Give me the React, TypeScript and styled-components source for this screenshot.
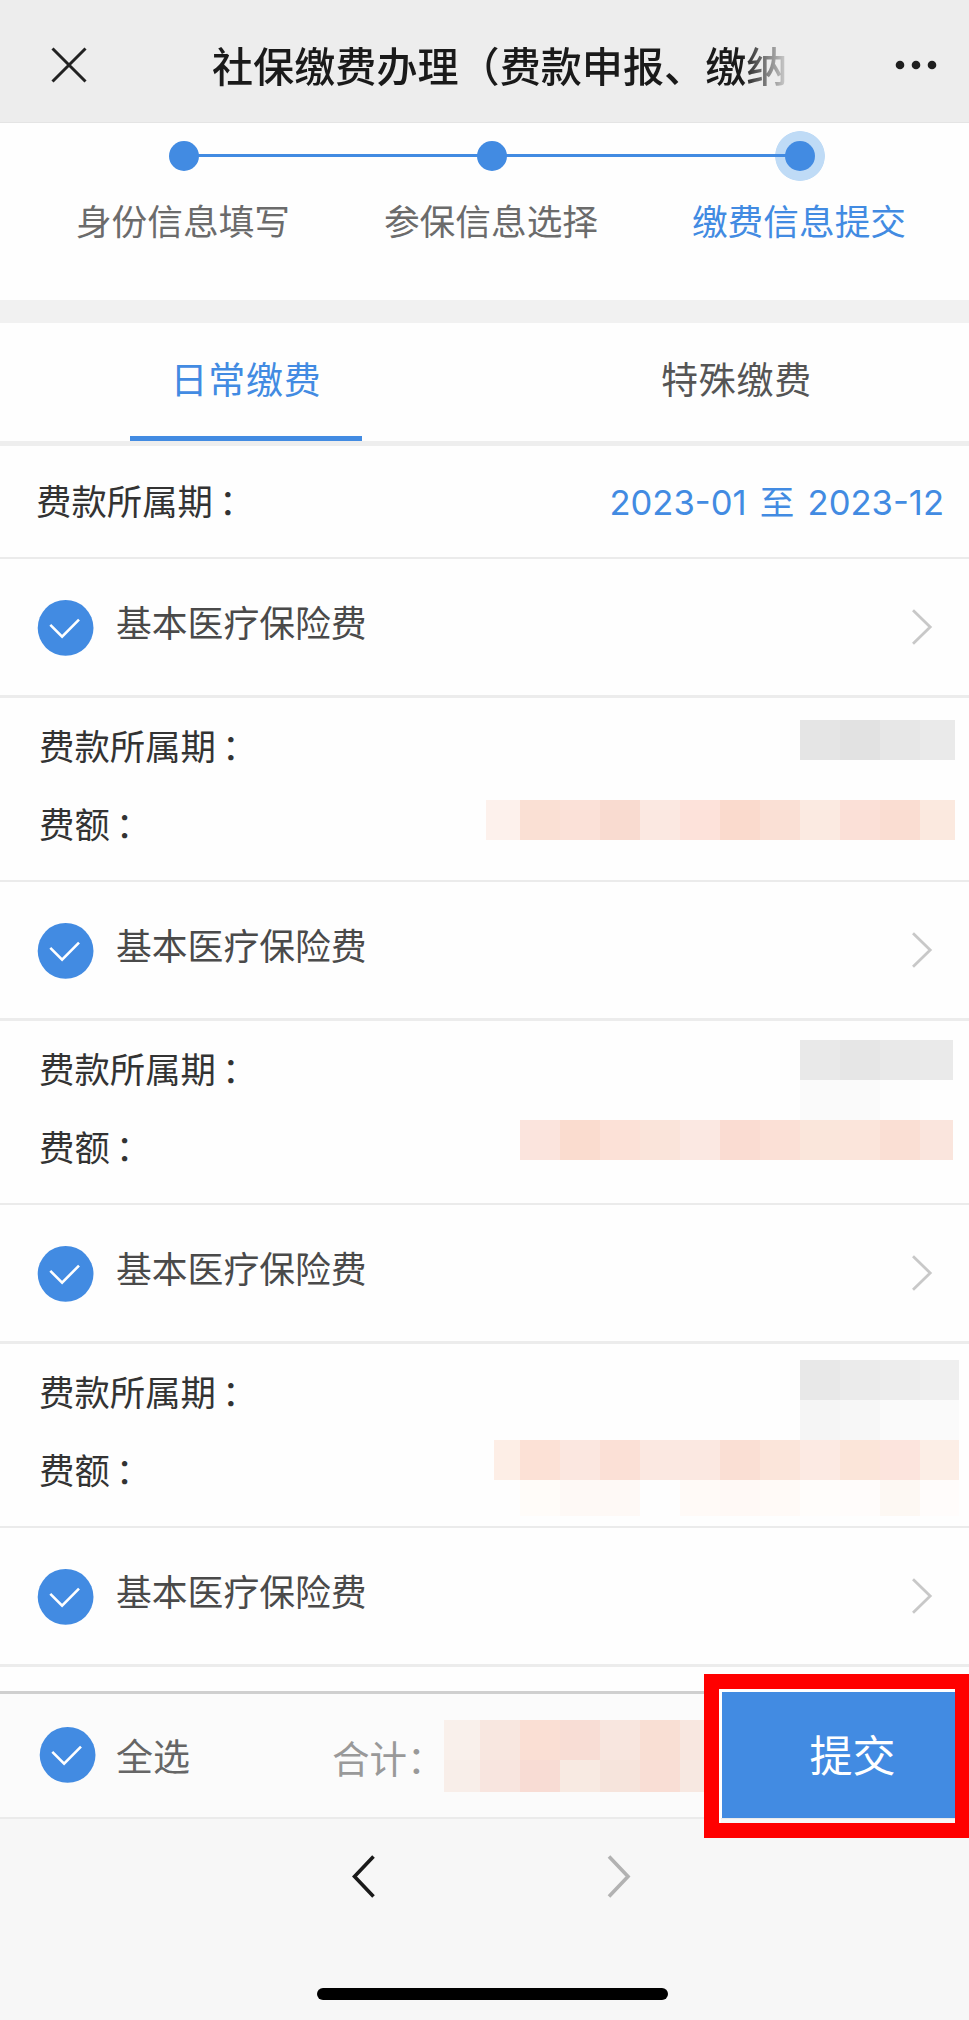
import React from 'react';
import styled, { createGlobalStyle } from 'styled-components';

const BLUE = '#428be2';

const GlobalStyle = createGlobalStyle`
  *, *::before, *::after { box-sizing: border-box; }
  html, body { margin: 0; padding: 0; background: #f7f7f7; }
  body {
    font-family: "Noto Sans CJK SC", "Noto Sans", sans-serif;
    overflow: hidden;
  }
  svg { display: block; }
`;

const Screen = styled.div`
  display: flex;
  flex-direction: column;
  width: 969px;
  height: 2020px;
  overflow: hidden;
  background: #fefefe;
`;

const NavBar = styled.header`
  display: flex;
  align-items: center;
  flex: none;
  height: 123px;
  padding: 8px 32px 0 51px;
  background: #ededed;
  border-bottom: 1px solid #e4e4e4;
`;

const Title = styled.h1`
  width: 580px;
  margin: 0 0 3px 125px;
  white-space: nowrap;
  font-size: 41.1px;
  line-height: 60px;
  font-weight: 500;
  color: #1a1a1a;
  mask-image: linear-gradient(to right, #000 530px, transparent 582px);
`;

const MoreIcon = styled.svg`
  margin-left: auto;
`;

const Steps = styled.section`
  display: grid;
  grid-template-columns: repeat(3, 308px);
  flex: none;
  height: 177px;
  padding: 8px 15px 0 30px;
`;

const Step = styled.div`
  display: flex;
  flex-direction: column;
  align-items: center;
`;

const Track = styled.div<{ $left: boolean; $right: boolean; $active: boolean }>`
  display: grid;
  place-items: center;
  width: 308px;
  height: 50px;
  background:
    linear-gradient(${BLUE}, ${BLUE}) 0 23px / ${(p) => (p.$left ? '154px' : '0')} 3px no-repeat,
    linear-gradient(${BLUE}, ${BLUE}) 100% 23px / ${(p) => (p.$right ? '154px' : '0')} 3px no-repeat,
    radial-gradient(circle, ${(p) => (p.$active ? '#bfdbf6' : 'transparent')} 24.5px, transparent 25.2px);
`;

const Dot = styled.span`
  width: 30px;
  height: 30px;
  border-radius: 50%;
  background: ${BLUE};
`;

const StepLabel = styled.span<{ $active: boolean }>`
  margin: 14px 2px 0 0;
  font-size: 35.7px;
  line-height: 50px;
  white-space: nowrap;
  color: ${(p) => (p.$active ? BLUE : '#6b6b6b')};
`;

const Divider = styled.div`
  flex: none;
  height: 23px;
  background: #f1f1f1;
`;

const Tabs = styled.nav`
  display: grid;
  grid-template-columns: 492px 489px;
  flex: none;
  height: 123px;
  border-bottom: 5px solid #eeeeee;
`;

const Tab = styled.div<{ $active?: boolean }>`
  display: flex;
  justify-content: center;
  justify-self: center;
  width: 232px;
  height: 118px;
  padding-top: 30px;
  font-size: 37px;
  letter-spacing: 0.8px;
  line-height: 50px;
  color: ${(p) => (p.$active ? BLUE : '#555')};
  border-bottom: 5px solid ${(p) => (p.$active ? BLUE : 'transparent')};
`;

const PeriodRow = styled.div`
  display: flex;
  justify-content: space-between;
  flex: none;
  height: 113px;
  padding: 29px 25px 0 36px;
  line-height: 50px;
  border-bottom: 2px solid #ebebeb;
`;

const Label = styled.span`
  font-size: 35.4px;
  color: #333;
`;

const Colon = styled.span`
  margin-left: 6px;
`;

const PeriodValue = styled.span`
  margin-top: 2px;
  font-family: Inter, "Noto Sans CJK SC", sans-serif;
  font-size: 34.6px;
  word-spacing: 3.5px;
  color: ${BLUE};
`;

const ItemHeader = styled.div`
  display: flex;
  flex: none;
  height: 139px;
  padding: 41px 34px 0 37px;
  border-bottom: 3px solid #ececec;
`;

const ItemName = styled.span`
  margin: -4px 0 0 22px;
  font-size: 35.8px;
  line-height: 50px;
  color: #4a4a4a;
`;

const Chevron = styled.svg`
  margin: 8px 0 0 auto;
`;

const ItemDetail = styled.div`
  display: flex;
  justify-content: space-between;
  flex: none;
  height: 184px;
  padding-left: 39px;
  border-bottom: 2px solid #ebebeb;
`;

const Labels = styled.div`
  display: flex;
  flex-direction: column;
  gap: 28px;
  padding-top: 22px;
  line-height: 50px;
`;

const Mosaic = styled.div<{ $top: number; $right: number }>`
  display: flex;
  flex-direction: column;
  align-items: flex-end;
  padding-top: ${(p) => p.$top}px;
  margin-right: ${(p) => p.$right}px;
`;

const MosaicRow = styled.div<{ $height?: number }>`
  display: flex;
  height: ${(p) => p.$height ?? 40}px;
`;

const Cell = styled.span<{ $w: number; $color: string }>`
  width: ${(p) => p.$w}px;
  background: ${(p) => p.$color};
`;

const Filler = styled.div`
  flex: 1;
`;

const ActionBar = styled.footer`
  position: relative;
  display: flex;
  flex: none;
  height: 128px;
  padding-left: 39px;
  background: #fbfbfb;
  border-top: 3px solid #cfcfcf;
  border-bottom: 2px solid #ebebeb;
`;

const BarCheck = styled.div`
  padding-top: 33px;
`;

const SelectAll = styled.span`
  width: 216px;
  margin: 36px 0 0 20px;
  font-size: 37px;
  line-height: 50px;
  color: #666;
`;

const Total = styled.span`
  width: 112px;
  margin-top: 38px;
  font-size: 37.5px;
  line-height: 50px;
  white-space: nowrap;
  color: #999;
`;

const TotalMosaic = styled.div`
  width: 276px;
  padding-top: 26px;
`;

const SubmitButton = styled.button`
  width: 249px;
  height: 126px;
  margin-top: -2px;
  padding: 0 11px 5px 25px;
  border: 0;
  border-left: 2px solid #fff;
  background: ${BLUE};
  color: #fff;
  font-family: inherit;
  font-size: 43px;
  line-height: 60px;
  text-align: center;
`;

const HighlightFrame = styled.div`
  position: absolute;
  left: 704px;
  top: -20px;
  width: 266px;
  height: 164px;
  border: 15px solid #ff0000;
  box-shadow: inset 0 3px #fff, inset 2px 0 #fff;
`;

const BrowserBar = styled.div`
  display: flex;
  flex-direction: column;
  align-items: center;
  flex: none;
  height: 201px;
  padding-top: 35px;
  background: #f7f7f7;
`;

const HistoryButtons = styled.div`
  display: flex;
  justify-content: space-between;
  width: 281px;
  margin-left: 14px;
`;

const HomeIndicator = styled.div`
  width: 351px;
  height: 12px;
  margin: auto 0 20px 16px;
  border-radius: 6px;
  background: #000;
`;

const CheckMark = () => (
  <svg width="57" height="57" viewBox="0 0 57 57" fill="none">
    <circle cx="28.6" cy="27.9" r="27.9" fill={BLUE} />
    <path d="M13.3 24.9 25.1 36.7 42 19.6" stroke="#fff" strokeWidth="2.6" />
  </svg>
);

const RightArrow = () => (
  <Chevron width="24" height="38" viewBox="0 0 24 38" fill="none">
    <path d="M2 2.2 19.2 19 2 35.8" stroke="#c8c8c8" strokeWidth="2.8" />
  </Chevron>
);

type CellData = [number, string];
interface RowData {
  height?: number;
  cells: CellData[];
}
interface Item {
  top: number;
  right: number;
  rows: RowData[];
}

const cells = (first: number, last: number, colors: string[]): CellData[] =>
  colors.map((c, i) => [i === 0 ? first : i === colors.length - 1 ? last : 40, c]);

const items: Item[] = [
  {
    top: 22,
    right: 14,
    rows: [
      { cells: cells(40, 35, ['#e5e5e5', '#e2e2e2', '#e7e7e7', '#eaeaea']) },
      { cells: [] },
      {
        cells: cells(34, 35, [
          '#fdf1ec', '#fae0d4', '#fbe1d8', '#f9dbd0', '#fbe8e1', '#fde2da',
          '#fadacd', '#fae0d5', '#fbeae1', '#fbe0d7', '#faddd2', '#fbe9df',
        ]),
      },
    ],
  },
  {
    top: 19,
    right: 16,
    rows: [
      { cells: cells(40, 33, ['#e9e9e9', '#e6e6e6', '#e9e9e9', '#eaeaea']) },
      { cells: cells(40, 33, ['#fafafa', '#fafafa', '#fdfdfd', '#fefefe']) },
      {
        cells: cells(40, 33, [
          '#fbe4dd', '#fadccf', '#fce1d7', '#fae4da', '#fbe8e2', '#fadcd2',
          '#fbe0d6', '#fae6db', '#fbe5db', '#fadfd4', '#fae5dd',
        ]),
      },
    ],
  },
  {
    top: 16,
    right: 10,
    rows: [
      { cells: cells(40, 39, ['#e8e8e8', '#ebebeb', '#ededed', '#efefef']) },
      { cells: cells(40, 39, ['#f5f5f5', '#f7f7f7', '#fafafa', '#fafafa']) },
      {
        cells: cells(26, 39, [
          '#fdeee6', '#fce1d6', '#fbe7e0', '#fbe0d6', '#fbe8e1', '#fbe8e1',
          '#fadfd4', '#fbe5da', '#fceae3', '#fbe5d9', '#fce4dd', '#fceee6',
        ]),
      },
      {
        height: 36,
        cells: cells(26, 39, [
          '#fefefe', '#fffcf9', '#fef9f6', '#fef9f6', '#fefefe', '#fffaf7',
          '#fff9f6', '#fffaf7', '#fffdfb', '#fffcfb', '#fdf8f3', '#fffcfb',
        ]),
      },
    ],
  },
];

const totalRows: RowData[] = [
  { cells: cells(36, 24, ['#f9f0eb', '#f8e7e0', '#fadfd4', '#f8ddd5', '#f8e6df', '#f9dfd4', '#f8e7e0']) },
  { height: 32, cells: cells(36, 24, ['#f8eee9', '#f8e5df', '#f8dcd4', '#f8eae2', '#f6e4dc', '#f9ded5', '#f7e8e1']) },
];

const MosaicRows = ({ rows }: { rows: RowData[] }) => (
  <>
    {rows.map((row, i) => (
      <MosaicRow key={i} $height={row.height}>
        {row.cells.map(([w, color], j) => (
          <Cell key={j} $w={w} $color={color} />
        ))}
      </MosaicRow>
    ))}
  </>
);

const InsuranceHeader = () => (
  <ItemHeader>
    <CheckMark />
    <ItemName>基本医疗保险费</ItemName>
    <RightArrow />
  </ItemHeader>
);

const steps = ['身份信息填写', '参保信息选择', '缴费信息提交'];

export default function App() {
  return (
    <>
      <GlobalStyle />
      <Screen>
        <NavBar>
          <svg width="36" height="36" viewBox="0 0 36 36" fill="none">
            <path d="M1.5 1.5 34.5 34.5M34.5 1.5 1.5 34.5" stroke="#222" strokeWidth="3" />
          </svg>
          <Title>社保缴费办理（费款申报、缴纳</Title>
          <MoreIcon width="42" height="10" viewBox="0 0 42 10" fill="#1f1f1f">
            <circle cx="5" cy="5" r="4.3" />
            <circle cx="21" cy="5" r="4.3" />
            <circle cx="37" cy="5" r="4.3" />
          </MoreIcon>
        </NavBar>

        <Steps>
          {steps.map((name, i) => (
            <Step key={name}>
              <Track $left={i > 0} $right={i < 2} $active={i === 2}>
                <Dot />
              </Track>
              <StepLabel $active={i === 2}>{name}</StepLabel>
            </Step>
          ))}
        </Steps>

        <Divider />

        <Tabs>
          <Tab $active>日常缴费</Tab>
          <Tab>特殊缴费</Tab>
        </Tabs>

        <PeriodRow>
          <Label>费款所属期<Colon>：</Colon></Label>
          <PeriodValue>2023-01 至 2023-12</PeriodValue>
        </PeriodRow>

        {items.map((item, i) => (
          <React.Fragment key={i}>
            <InsuranceHeader />
            <ItemDetail>
              <Labels>
                <Label>费款所属期<Colon>：</Colon></Label>
                <Label>费额<Colon>：</Colon></Label>
              </Labels>
              <Mosaic $top={item.top} $right={item.right}>
                <MosaicRows rows={item.rows} />
              </Mosaic>
            </ItemDetail>
          </React.Fragment>
        ))}
        <InsuranceHeader />

        <Filler />

        <ActionBar>
          <BarCheck>
            <CheckMark />
          </BarCheck>
          <SelectAll>全选</SelectAll>
          <Total>合计：</Total>
          <TotalMosaic>
            <MosaicRows rows={totalRows} />
          </TotalMosaic>
          <SubmitButton>提交</SubmitButton>
          <HighlightFrame />
        </ActionBar>

        <BrowserBar>
          <HistoryButtons>
            <svg width="26" height="46" viewBox="0 0 26 46" fill="none">
              <path d="M22.5 2.5 3.5 22.5 22.5 42.5" stroke="#1a1a1a" strokeWidth="3.6" />
            </svg>
            <svg width="26" height="46" viewBox="0 0 26 46" fill="none">
              <path d="M3 2.5 22 22.5 3 42.5" stroke="#b2b2b2" strokeWidth="3.6" />
            </svg>
          </HistoryButtons>
          <HomeIndicator />
        </BrowserBar>
      </Screen>
    </>
  );
}
